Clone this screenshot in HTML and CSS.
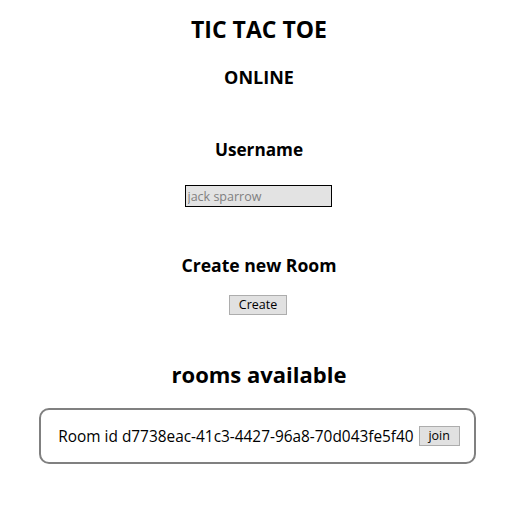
FILE: index.html
```html
<!DOCTYPE html>
<html>
<head>
<meta charset="utf-8">
<link rel="stylesheet" href="styles.css">
</head>
<body>
<div class="app">
  <h1 class="title">TIC TAC TOE</h1>
  <h3 class="subtitle">ONLINE</h3>
  <h3 class="label label-user">Username</h3>
  <input class="name-input" type="text" placeholder="jack sparrow">
  <h3 class="label label-create">Create new Room</h3>
  <button class="btn btn-create">Create</button>
  <h2 class="rooms-title">rooms available</h2>
  <div class="room">
    <span class="room-id">Room id d7738eac-41c3-4427-96a8-70d043fe5f40</span>
    <button class="btn btn-join">join</button>
  </div>
</div>
</body>
</html>
```
FILE: styles.css
```css
html, body {
  margin: 0;
  padding: 0;
  background: #ffffff;
}
body {
  font-family: "Open Sans", "Noto Sans", sans-serif;
  color: #000;
}
.app {
  display: flex;
  flex-direction: column;
  align-items: center;
}
.title {
  margin: 13px 0 0;
  font-size: 23px;
  line-height: 32px;
  font-weight: 700;
}
.subtitle {
  margin: 20px 0 0;
  font-size: 18px;
  line-height: 24px;
  font-weight: 700;
}
.label {
  margin: 0;
  line-height: 24px;
  font-weight: 700;
}
.label-user { margin-top: 49px; font-size: 17.2px; }
.label-create { margin-top: 46px; font-size: 17.6px; }
.name-input {
  margin-top: 23px;
  margin-right: 2px;
  box-sizing: border-box;
  width: 147px;
  height: 22px;
  border: 1px solid #000;
  background: #e3e3e3;
  padding: 0 2px;
  font-family: "Open Sans", sans-serif;
  font-size: 12.5px;
  outline: none;
}
.name-input::placeholder { color: #808080; }
.btn {
  box-sizing: border-box;
  height: 20px;
  padding: 0 4px;
  border: 1px solid #adadad;
  background: #e1e1e1;
  font-family: "Open Sans", sans-serif;
  font-size: 12.5px;
  line-height: 18px;
  color: #000;
  border-radius: 0;
}
.btn-create {
  margin-top: 18px;
  margin-right: 2px;
  width: 58px;
}
.rooms-title {
  margin: 43px 0 0;
  font-size: 22px;
  line-height: 32px;
  font-weight: 700;
}
.room {
  margin-top: 18px;
  margin-right: 3px;
  box-sizing: border-box;
  width: 437px;
  height: 56px;
  border: 2px solid #808080;
  border-radius: 10px;
  display: flex;
  align-items: center;
  justify-content: center;
  gap: 5px;
  padding-left: 3px;
}
.room-id {
  font-size: 15.4px;
}
.btn-join {
  width: 41px;
}
```
